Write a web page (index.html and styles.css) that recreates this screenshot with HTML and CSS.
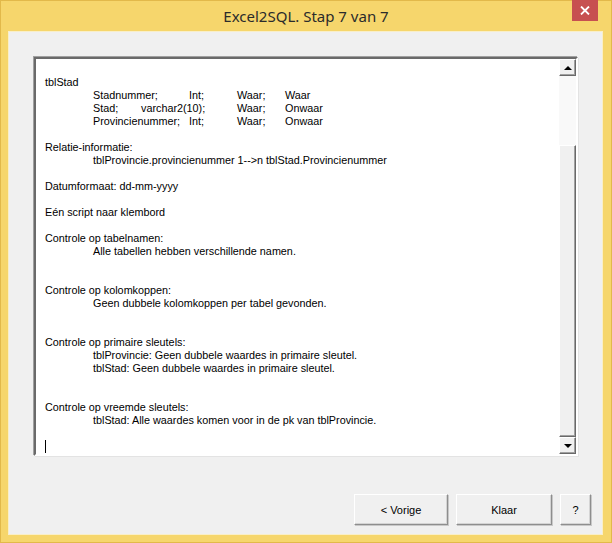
FILE: index.html
```html
<!DOCTYPE html>
<html lang="nl">
<head>
  <meta charset="UTF-8">
  <title>Excel2SQL. Stap 7 van 7</title>
  <link rel="stylesheet" href="styles.css">
</head>
<body>
  <div class="window">
    <div class="titlebar">
      <span class="title">Excel2SQL. Stap 7 van 7</span>
      <button class="close-btn" aria-label="Sluiten">
        <svg width="10" height="9" viewBox="0 0 10 9"><path d="M1 0.5 L9 8.5 M9 0.5 L1 8.5" stroke="#fff" stroke-width="1.8"/></svg>
      </button>
    </div>

    <div class="client">
      <div class="memo">
        <div class="memo-text"><div class="line"></div><div class="line">tblStad</div><div class="line">&#9;Stadnummer;&#9;Int;&#9;Waar;&#9;Waar</div><div class="line">&#9;Stad;&#9;varchar2(10);&#9;Waar;&#9;Onwaar</div><div class="line">&#9;Provincienummer;&#9;Int;&#9;Waar;&#9;Onwaar</div><div class="line"></div><div class="line">Relatie-informatie:</div><div class="line">&#9;tblProvincie.provincienummer 1--&gt;n tblStad.Provincienummer</div><div class="line"></div><div class="line">Datumformaat: dd-mm-yyyy</div><div class="line"></div><div class="line">Eén script naar klembord</div><div class="line"></div><div class="line">Controle op tabelnamen:</div><div class="line">&#9;Alle tabellen hebben verschillende namen.</div><div class="line"></div><div class="line"></div><div class="line">Controle op kolomkoppen:</div><div class="line">&#9;Geen dubbele kolomkoppen per tabel gevonden.</div><div class="line"></div><div class="line"></div><div class="line">Controle op primaire sleutels:</div><div class="line">&#9;tblProvincie: Geen dubbele waardes in primaire sleutel.</div><div class="line">&#9;tblStad: Geen dubbele waardes in primaire sleutel.</div><div class="line"></div><div class="line"></div><div class="line">Controle op vreemde sleutels:</div><div class="line">&#9;tblStad: Alle waardes komen voor in de pk van tblProvincie.</div><div class="line"></div><div class="line"><span class="caret"></span></div></div>
        <div class="scrollbar">
          <div class="sb-btn"><span class="arrow-up"></span></div>
          <div class="sb-track"></div>
          <div class="sb-thumb"></div>
          <div class="sb-btn"><span class="arrow-down"></span></div>
        </div>
      </div>

      <div class="buttons">
        <button class="btn btn-prev">&lt; Vorige</button>
        <button class="btn btn-done">Klaar</button>
        <button class="btn btn-help">?</button>
      </div>
    </div>
  </div>
</body>
</html>
```

FILE: styles.css
```css
html, body {
  margin: 0;
  padding: 0;
}

body {
  width: 612px;
  height: 543px;
  overflow: hidden;
  font-family: 'Liberation Sans', Arial, sans-serif;
  font-size: 11px;
  color: #000;
}

.window {
  box-sizing: border-box;
  width: 612px;
  height: 543px;
  background-color: #f6d66c;
  border: 1px solid #e2b94a;
  display: flex;
  flex-direction: column;
}

.titlebar {
  height: 30px;
  display: flex;
  align-items: center;
  justify-content: center;
  position: relative;
}

.title {
  font-family: 'Noto Sans', 'Open Sans', sans-serif;
  font-size: 15px;
  color: #2b2b2b;
  margin-top: -1px;
}

.close-btn {
  position: absolute;
  top: -1px;
  right: 13px;
  width: 26px;
  height: 21px;
  border: none;
  padding: 0;
  background-color: #c75050;
  display: flex;
  align-items: center;
  justify-content: center;
}

.client {
  flex: 1;
  margin: 0 8px 7px 7px;
  background-color: #f0f0f0;
  border: 1px solid #f9efc9;
  padding: 25px 0 0 25px;
  display: flex;
  flex-direction: column;
}

.memo {
  width: 540px;
  height: 395px;
  display: flex;
  background-color: #fff;
  border-style: solid;
  border-width: 2px;
  border-color: #6a6a6a #fff #fff #6a6a6a;
  box-shadow: -1px -1px 0 #a0a0a0, 1px 1px 0 #e3e3e3;
}

.memo-text {
  flex: 1;
  padding: 4px 0 0 9px;
  white-space: pre;
  tab-size: 48px;
  font-size: 10.8px;
  overflow: hidden;
}

.line {
  height: 13px;
  line-height: 13px;
}

.caret {
  display: inline-block;
  width: 1px;
  height: 13px;
  background-color: #000;
  vertical-align: top;
}

.scrollbar {
  width: 17px;
  display: flex;
  flex-direction: column;
}

.sb-btn {
  box-sizing: border-box;
  height: 17px;
  background-color: #f0f0f0;
  border-style: solid;
  border-width: 1px;
  border-color: #fff #696969 #696969 #fff;
  box-shadow: inset -1px -1px 0 #a0a0a0;
  display: flex;
  align-items: center;
  justify-content: center;
}

.arrow-up {
  width: 0;
  height: 0;
  border-left: 4px solid transparent;
  border-right: 4px solid transparent;
  border-bottom: 4px solid #000;
}

.arrow-down {
  width: 0;
  height: 0;
  border-left: 4px solid transparent;
  border-right: 4px solid transparent;
  border-top: 4px solid #000;
}

.sb-track {
  height: 69px;
  background-color: #f9f9f9;
}

.sb-thumb {
  flex: 1;
  box-sizing: border-box;
  background-color: #f0f0f0;
  border-style: solid;
  border-width: 1px;
  border-color: #fff #696969 #696969 #fff;
  box-shadow: inset -1px -1px 0 #a0a0a0;
}

.buttons {
  display: flex;
  justify-content: flex-end;
  gap: 8px;
  margin-top: 38px;
  padding-right: 11px;
}

.btn {
  box-sizing: border-box;
  height: 31px;
  font-family: 'Liberation Sans', Arial, sans-serif;
  font-size: 11px;
  color: #000;
  background-color: #f0f0f0;
  border-style: solid;
  border-width: 1px;
  border-color: #fff #8e8e8e #8e8e8e #fff;
  box-shadow: 1px 1px 0 #c8c8c8, inset -1px -1px 0 #d4d4d4;
  padding: 0;
}

.btn-prev {
  width: 94px;
}

.btn-done {
  width: 96px;
}

.btn-help {
  width: 31px;
}
```
